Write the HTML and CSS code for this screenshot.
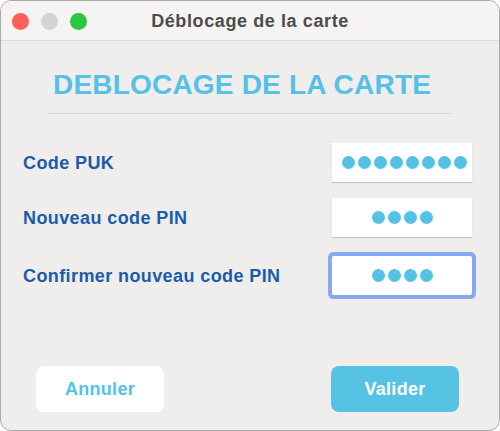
FILE: index.html
```html
<!DOCTYPE html>
<html lang="fr">
<head>
    <meta charset="UTF-8">
    <meta name="viewport" content="width=device-width, initial-scale=1.0">
    <title>Déblocage de la carte</title>
    <link rel="stylesheet" href="styles.css">
</head>
<body>
    <div class="window">
        <div class="titlebar">
            <div class="lights">
                <span class="light red"></span>
                <span class="light grey"></span>
                <span class="light green"></span>
            </div>
            <span class="title">Déblocage de la carte</span>
        </div>

        <div class="content">
            <h1>DEBLOCAGE DE LA CARTE</h1>
            <hr class="rule">

            <div class="row row-puk">
                <label>Code PUK</label>
                <div class="field">
                    <span class="dot"></span><span class="dot"></span><span class="dot"></span><span class="dot"></span>
                    <span class="dot"></span><span class="dot"></span><span class="dot"></span><span class="dot"></span>
                </div>
            </div>
            <div class="row row-pin">
                <label>Nouveau code PIN</label>
                <div class="field">
                    <span class="dot"></span><span class="dot"></span><span class="dot"></span><span class="dot"></span>
                </div>
            </div>
            <div class="row row-confirm">
                <label>Confirmer nouveau code PIN</label>
                <div class="field focused">
                    <span class="dot"></span><span class="dot"></span><span class="dot"></span><span class="dot"></span>
                </div>
            </div>

            <div class="buttons">
                <button class="btn btn-cancel">Annuler</button>
                <button class="btn btn-ok">Valider</button>
            </div>
        </div>
    </div>
</body>
</html>
```

FILE: styles.css
```css
body {
    margin: 0;
    padding: 0;
    background-color: #ffffff;
    font-family: "Liberation Sans", Arial, sans-serif;
}

.window {
    width: 500px;
    height: 431px;
    box-sizing: border-box;
    border: 1px solid #a9a9a9;
    border-radius: 11px;
    overflow: hidden;
    background-color: #f0eeed;
}

.titlebar {
    height: 39px;
    background-color: #f6f4f3;
    border-bottom: 1px solid #dcdad9;
    display: flex;
    align-items: center;
    justify-content: center;
    position: relative;
}

.lights {
    position: absolute;
    left: 11px;
    top: 12px;
    display: flex;
    gap: 12px;
}

.light {
    width: 17px;
    height: 17px;
    border-radius: 50%;
}

.red { background-color: #fe5f57; }
.grey { background-color: #d6d4d3; }
.green { background-color: #29c840; }

.title {
    font-size: 18px;
    font-weight: bold;
    letter-spacing: 0.6px;
    color: #4b4b4b;
    margin-top: 1px;
}

h1 {
    margin: 28px 0 0 52px;
    font-size: 28px;
    line-height: 32px;
    font-weight: bold;
    letter-spacing: 0.2px;
    color: #55c1e6;
}

.rule {
    margin: 12px 48px 0 48px;
    border: 0;
    height: 1px;
    background-color: #d9d7d6;
}

.row {
    display: flex;
    align-items: center;
    justify-content: space-between;
    padding: 0 27px 0 22px;
    height: 39px;
}

.row-puk { margin-top: 29px; }
.row-pin { margin-top: 16px; }
.row-confirm { margin-top: 19px; }

label {
    font-size: 18px;
    font-weight: bold;
    letter-spacing: 0.4px;
    color: #1b5ca9;
    padding-top: 1px;
}

.field {
    width: 140px;
    height: 39px;
    box-sizing: border-box;
    background-color: #ffffff;
    box-shadow: 0 1px 1px #c9c7c6;
    display: flex;
    align-items: center;
    justify-content: center;
    gap: 3px;
    overflow: hidden;
}

.row-puk .field {
    justify-content: flex-start;
    padding-left: 10px;
}

.field.focused {
    box-shadow: 0 0 0 4px #87a9f1;
    border-radius: 2px;
}

.dot {
    flex-shrink: 0;
    width: 13px;
    height: 13px;
    border-radius: 50%;
    background-color: #55c1e6;
}

.buttons {
    display: flex;
    justify-content: space-between;
    padding: 0 40px 0 35px;
    margin-top: 71px;
}

.btn {
    width: 128px;
    height: 46px;
    border: 0;
    border-radius: 8px;
    font-family: "Liberation Sans", Arial, sans-serif;
    font-size: 18px;
    font-weight: bold;
    letter-spacing: 0.3px;
}

.btn-cancel {
    background-color: #ffffff;
    color: #55c1e6;
}

.btn-ok {
    background-color: #56c2e4;
    color: #ffffff;
}
```
